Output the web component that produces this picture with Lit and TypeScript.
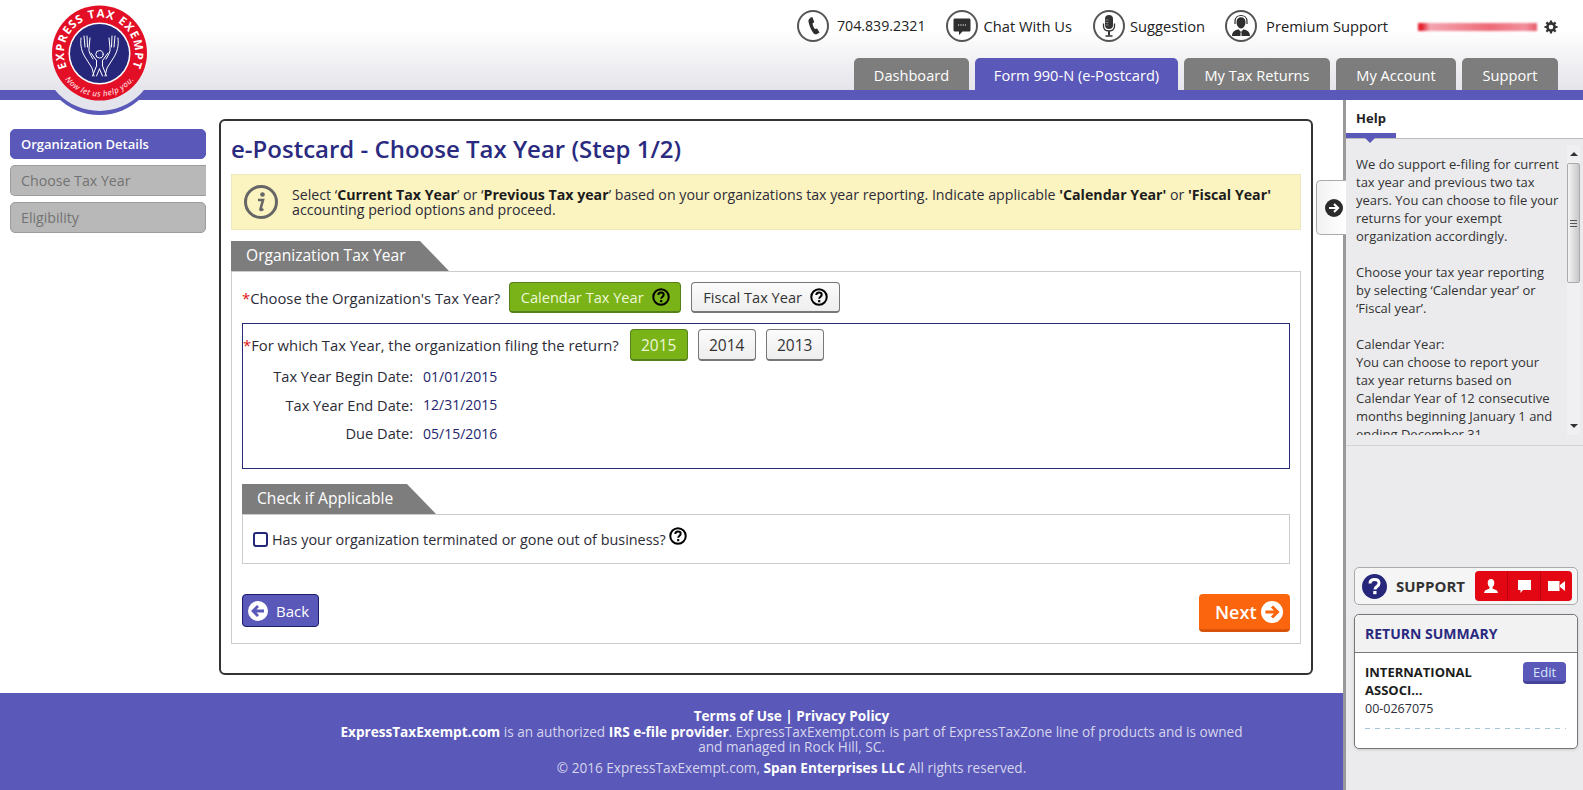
import { LitElement, html, css, svg } from 'lit';
import { customElement } from 'lit/decorators.js';

const helpIcon = (size = 18) => html`<svg class="q" width=${size} height=${size} viewBox="0 0 20 20">
  <circle cx="10" cy="10" r="8.6" fill="none" stroke="#000" stroke-width="2.2"/>
  <path d="M7 7.800c0-1.800 1.300-2.800 3-2.800s3 1 3 2.500c0 2.200-2.800 2.200-2.800 4.500" fill="none" stroke="#000" stroke-width="2.2"/>
  <rect x="9" y="13.400" width="2.400" height="2.400" fill="#000"/>
</svg>`;

const circleWrap = (inner: unknown) => html`<svg class="ring" width="34" height="34" viewBox="0 0 34 34">
  <circle cx="17" cy="17" r="15" fill="#fff" stroke="#555" stroke-width="2"/>${inner}
</svg>`;

const phoneIcon = circleWrap(svg`<path d="M13.500 9l2.800-1 2 5-1.800 1.400c.3 2.200 1.200 4.200 2.600 5.600l2-.6 2.400 4-2.400 1.600c-1.400.8-2.800.2-3.800-1-2.200-3-4-7.500-4.800-11.300-.2-1.400.3-3.100 2-3.700z" fill="#2e2e2e"/>`);
const chatIcon = circleWrap(svg`<path d="M10 9.500h14c1 0 1.500.6 1.500 1.500v10c0 1-.6 1.500-1.500 1.500h-6.500L14 26v-3.500h-4c-1 0-1.500-.6-1.500-1.500V11c0-.9.5-1.500 1.500-1.500z" fill="#2e2e2e"/><path d="M13 16h8" stroke="#fff" stroke-width="1.200" stroke-dasharray="1.200 1.100"/>`);
const micIcon = circleWrap(svg`<rect x="13" y="6" width="8" height="14" rx="4" fill="#333"/><path d="M11.500 14.500V17c0 3.300 2.300 5 5.500 5s5.500-1.700 5.500-5v-2.500" fill="none" stroke="#333" stroke-width="1.300"/><path d="M17 22v4.500" stroke="#333" stroke-width="2"/><path d="M13.500 27h7" stroke="#333" stroke-width="1.500"/><path d="M13.500 11h3M13.500 13.500h3M13.500 16h3" stroke="#999" stroke-width=".8"/>`);
const agentIcon = circleWrap(svg`<path d="M12.500 13c0-3 2-4.800 4.500-4.800s4.500 1.800 4.500 4.800c0 3.500-2 6.500-4.500 6.500s-4.500-3-4.500-6.500z" fill="#2e2e2e"/><path d="M11 15v-2.500c0-8 12-8 12 0V15" fill="none" stroke="#2e2e2e" stroke-width="1.200"/><path d="M8 27c0-4.500 3-5.800 6.500-6.800L17 23l2.500-2.800c3.500 1 6.500 2.300 6.500 6.800z" fill="#2e2e2e"/><path d="M17 23.500v3.500" stroke="#fff" stroke-width="1"/>`);

const gearIcon = html`<svg width="14" height="14" viewBox="0 0 14 14"><circle cx="7" cy="7" r="3.600" fill="none" stroke="#333" stroke-width="2.600"/><path d="M7 .5v3M7 10.500v3M.5 7h3M10.500 7h3M2.400 2.400l2.100 2.100M9.500 9.500l2.100 2.100M2.400 11.600l2.100-2.100M9.500 4.500l2.100-2.100" stroke="#333" stroke-width="2.200"/></svg>`;

const handStrokes = svg`
  <path d="M41 38C40 46 42 52 45 57L52 68L54 76"/>
  <path d="M44 36L45 47M47 36L47.500 47"/>
  <path d="M50 38L49 48C48.500 52 50 54 53 59"/>
  <path d="M56.500 60.500L51 53M56.500 60.500L56.500 66L52.500 76M56.500 76L59.500 69"/>
`;

const logo = html`<svg class="logo" width="120" height="120" viewBox="0 0 120 120">
  <defs>
    <clipPath id="under"><rect x="0" y="90" width="120" height="30"/></clipPath>
    <path id="top" d="M32.300 75.800A35.500 35.500 0 1 1 86.700 75.800"/>
    <path id="bot" d="M21.800 74.750A43.500 43.500 0 0 0 97.200 74.750"/>
  </defs>
  <g clip-path="url(#under)">
    <circle cx="59.500" cy="55.500" r="59.500" fill="#5a58b8"/>
    <circle cx="59.500" cy="53.500" r="57.500" fill="#e4e4ec"/>
  </g>
  <circle cx="59.500" cy="53" r="47.500" fill="#e30f26"/>
  <circle cx="59.500" cy="53.500" r="31" fill="#fff"/>
  <circle cx="59.500" cy="53.500" r="29.500" fill="#26277a"/>
  <text font-family="Open Sans" font-weight="700" font-size="11.500" fill="#fff" letter-spacing="1.100"><textPath href="#top" startOffset="50%" text-anchor="middle">EXPRESS TAX EXEMPT</textPath></text>
  <text font-family="Open Sans" font-style="italic" font-weight="600" font-size="8" letter-spacing=".3" fill="#ffc9cf"><textPath href="#bot" startOffset="50%" text-anchor="middle">Now let us help you.</textPath></text>
  <g fill="none" stroke="#fff" stroke-width="1" stroke-linecap="round">
    <circle cx="59.500" cy="54.300" r="3.700"/>
    ${handStrokes}
    <g transform="translate(119 0) scale(-1 1)">${handStrokes}</g>
  </g>
</svg>`;

const arrowCircle = (r: number, color: string, dir: 'l' | 'r') => html`<svg width=${r * 2} height=${r * 2} viewBox="0 0 20 20">
  <circle cx="10" cy="10" r="10" fill="#fff"/>
  <path d=${dir === 'l' ? 'M16 10H6M10 5l-5 5 5 5' : 'M4 10h10M10 5l5 5-5 5'} fill="none" stroke=${color} stroke-width="2.800"/>
</svg>`;

@customElement('app-root')
export class AppRoot extends LitElement {
  static styles = css`
    :host {
      display: block;
      width: 1583px;
      height: 790px;
      overflow: hidden;
      position: relative;
      font-family: "Open Sans", sans-serif;
      font-size: 14.800px;
      color: #2c2c38;
      background: #fff;
    }
    * { box-sizing: border-box; }
    svg { display: block; flex: none; }

    header {
      height: 100px;
      border-bottom: 10px solid #5a58b8;
      background: linear-gradient(#fff 30px, #e4e4ea 90px);
      display: flex;
      flex-direction: column;
      align-items: flex-end;
      padding-right: 25px;
    }
    .logo { position: absolute; left: 40px; top: 0; }
    .top {
      height: 58px;
      display: flex;
      align-items: center;
      padding-bottom: 7px;
      font-size: 14.700px;
      color: #222;
    }
    .link { display: flex; align-items: center; }
    .link.phone { margin-right: 19px; gap: 7px; font-size: 14.200px; }
    .link.chat { margin-right: 20px; gap: 5px; }
    .link.sug { margin-right: 19px; gap: 4px; }
    .link.prem { gap: 8px; }
    .blur {
      width: 119px;
      height: 8px;
      margin: 2px 7px 0 30px;
      background: linear-gradient(90deg, #e3202e 0 4px, #f3a6b0 12px, #ee6a78 60%, #f1909c 90%, #e85a68);
      filter: blur(1px);
    }
    .gear { margin-top: 2px; }
    .tabs {
      display: grid;
      grid-template-columns: 115px 203px 146px 120px 96px;
      gap: 6px;
      height: 32px;
    }
    .tab {
      height: 32px;
      background: #7d7d7d;
      color: #fff;
      border-radius: 5px 5px 0 0;
      display: flex;
      align-items: center;
      justify-content: center;
      font-size: 14.600px;
      padding-top: 2px;
    }
    .tab.on { background: #5a58b8; }

    .body { display: flex; height: 690px; }
    .left { width: 1343px; display: flex; flex-direction: column; }
    .work { height: 593px; display: flex; padding: 19px 30px 0 10px; gap: 13px; }

    nav { width: 196px; display: flex; flex-direction: column; gap: 6px; padding-top: 10px; }
    nav div {
      height: 31px;
      line-height: 29px;
      padding-left: 10px;
      background: #b8b8b8;
      border: 1px solid #9c9c9c;
      border-radius: 5px;
      color: #737373;
      font-size: 14.200px;
      font-weight: 500;
    }
    nav div.on { background: #5a58b8; border-color: #5a58b8; color: #fff; font-size: 13px; font-weight: 600; height: 30px; }
    nav div.sq { border-radius: 5px 0 0 5px; border-right: 0; }

    .card {
      width: 1094px;
      height: 556px;
      border: 2px solid #333;
      border-radius: 6px;
      padding: 0 10px;
    }
    h1 {
      margin: 0;
      height: 53px;
      padding-top: 10px;
      font-size: 24px;
      line-height: 36px;
      font-weight: 600;
      color: #2a2a80;
    }
    .alert {
      height: 56px;
      background: #fbf3c0;
      border: 1px solid #eee8c0;
      display: flex;
      align-items: center;
      gap: 13px;
      padding-left: 11px;
      font-size: 14.200px;
      line-height: 15px;
      margin-bottom: 11px;
    }
    .alert b { color: #1c1c1c; }
    .section-tab {
      height: 30px;
      background: #7d7d7d;
      color: #fff;
      font-size: 15.600px;
      line-height: 29px;
      padding-left: 15px;
    }
    .t1 { width: 218px; clip-path: polygon(0 0, 189px 0, 100% 100%, 0 100%); }
    .t2 { width: 194px; clip-path: polygon(0 0, 165px 0, 100% 100%, 0 100%); }
    .box {
      border: 1px solid #ccc;
      height: 373px;
      padding: 10px 10px 0;
      display: flex;
      flex-direction: column;
    }
    .row { display: flex; align-items: center; }
    .req { color: #e01010; }
    .btn {
      height: 32px;
      border: 1px solid #777;
      border-bottom-width: 2px;
      border-radius: 4px;
      background: linear-gradient(#fbfbfb, #eee);
      display: flex;
      align-items: center;
      justify-content: center;
      gap: 8px;
      font-size: 14.600px;
      color: #333;
    }
    .btn.on { background: #7ab317; border-color: #56801a; color: #eef7d8; }
    .cal { width: 172px; margin-left: 9px; height: 31px; }
    .fis { width: 149px; margin-left: 10px; height: 31px; }
    .yr { width: 58px; margin-right: 10px; font-size: 15.500px; }
    .years .lead { margin-right: 11px; }
    .inner {
      border: 1px solid #2a2a7a;
      height: 146px;
      margin-top: 10px;
      padding: 5px 0 0;
    }
    .dates {
      display: grid;
      grid-template-columns: 170px auto;
      column-gap: 10px;
      margin-top: 1px;
      grid-auto-rows: 28.500px;
      align-items: center;
      justify-content: start;
      font-size: 14.600px;
    }
    .dates span:nth-child(odd) { text-align: right; }
    .dates span:nth-child(even) { color: #24246e; font-size: 14px; }
    .check { margin-top: 15px; }
    .check-box {
      border: 1px solid #ccc;
      height: 50px;
      display: flex;
      align-items: center;
      padding-left: 10px;
      font-size: 14.400px;
    }
    .cb { width: 15px; height: 15px; border: 2px solid #26277a; border-radius: 3px; margin-right: 4px; margin-top: 1px; }
    .check-box .q { margin: -6px 0 0 3px; }
    .actions { display: flex; justify-content: space-between; align-items: flex-start; margin-top: 30px; }
    .back {
      width: 77px;
      height: 33px;
      background: #5a58b8;
      border: 1px solid #1c1c6a;
      border-radius: 4px;
      color: #fff;
      font-size: 15px;
      display: flex;
      align-items: center;
      gap: 8px;
      padding-left: 5px;
    }
    .next {
      width: 91px;
      height: 38px;
      background: #fb650d;
      border-bottom: 3px solid #d9540a;
      border-radius: 4px;
      color: #fff;
      font-size: 18px;
      font-weight: 600;
      display: flex;
      align-items: center;
      gap: 4px;
      padding-left: 16px;
    }

    footer {
      height: 97px;
      background: #5a58b8;
      color: #fff;
      padding: 15px 0 0 240px;
      text-align: center;
      font-size: 13.600px;
      line-height: 15.500px;
    }
    footer p { margin: 0 auto; width: 920px; color: #d6d6ee; }
    footer b { color: #fff; font-weight: 700; }
    footer .copy { margin-top: 5px; }

    aside {
      width: 240px;
      position: relative;
      background: #ebebee;
      border-left: 3px solid #999;
      display: flex;
      flex-direction: column;
    }
    .handle {
      position: absolute;
      left: -30px;
      top: 80px;
      width: 30px;
      height: 55px;
      background: linear-gradient(90deg, #f2f2f2, #fff);
      border: 1px solid #aaa;
      border-right: 0;
      border-radius: 5px 0 0 5px;
      display: flex;
      align-items: center;
      padding-left: 8px;
    }
    .help-head {
      height: 39px;
      background: #fff;
      border-bottom: 1px solid #bbb;
      position: relative;
    }
    .help-tab {
      width: 50px;
      height: 38px;
      border-bottom: 5px solid #5a58b8;
      text-align: center;
      font-size: 13px;
      font-weight: 700;
      line-height: 36px;
      color: #222;
    }
    .help-tab::after {
      content: '';
      position: absolute;
      left: 19px;
      top: 38px;
      border: 5px solid transparent;
      border-top-color: #5a58b8;
      border-bottom: 0;
    }
    .help-body {
      height: 307px;
      border-bottom: 1px solid #d4d4d8;
      padding: 6px 3px 10px 10px;
      display: flex;
      justify-content: space-between;
    }
    .help-text {
      width: 205px;
      height: 290px;
      overflow: hidden;
      font-size: 13px;
      line-height: 18px;
      padding-top: 10px;
      color: #333;
    }
    .help-text p { margin: 0 0 18px; }
    .scroll {
      width: 13px;
      height: 290px;
      background: #f0f0f2;
      display: flex;
      flex-direction: column;
      align-items: center;
    }
    .arrow { height: 18px; display: flex; align-items: center; justify-content: center; font-size: 0; }
    .arrow i { border: 4px solid transparent; border-bottom: 4px solid #333; border-top: 0; }
    .arrow.down i { border-bottom: 0; border-top: 4px solid #333; }
    .thumb {
      width: 13px;
      height: 120px;
      border: 1px solid #aaa;
      border-radius: 2px;
      background: linear-gradient(90deg, #f4f4f4, #c8c8c8);
      display: flex;
      align-items: center;
      justify-content: center;
    }
    .thumb i { width: 7px; height: 7px; border-top: 1px solid #555; border-bottom: 1px solid #555; position: relative; }
    .thumb i::after { content: ''; position: absolute; left: 0; right: 0; top: 2px; height: 1px; background: #555; }
    .spacer { flex: 1; }
    .support {
      margin: 121px 5px 0 8px;
      height: 38px;
      background: #f5f5f5;
      border: 1px solid #aaa;
      border-radius: 5px;
      display: flex;
      align-items: center;
      padding-left: 7px;
      gap: 9px;
      font-size: 15px;
      font-weight: 700;
      color: #333;
    }
    .support .red {
      margin-left: auto;
      margin-right: 5px;
      width: 97px;
      height: 30px;
      background: #e30613;
      border-radius: 4px;
      display: grid;
      grid-template-columns: 32px 33px 32px;
    }
    .red div { display: flex; align-items: center; justify-content: center; border-left: 1px solid #b80510; }
    .red div:first-child { border-left: 0; }
    .summary {
      margin: 9px 5px 0 8px;
      height: 135px;
      background: #fff;
      border: 1px solid #777;
      border-radius: 5px;
      box-shadow: 0 1px 3px #0002;
    }
    .sum-head {
      height: 38px;
      background: #f2f2f2;
      border-bottom: 1px solid #777;
      border-radius: 5px 5px 0 0;
      padding-left: 10px;
      font-size: 14px;
      font-weight: 700;
      line-height: 37px;
      color: #2a2a80;
    }
    .sum-body { padding: 10px 11px 0 10px; }
    .org { display: flex; justify-content: space-between; align-items: flex-start; }
    .org b { font-size: 13px; line-height: 18px; color: #1c1c1c; width: 120px; }
    .edit {
      width: 43px;
      height: 22px;
      margin-top: -1px;
      background: #5a58b8;
      border-bottom: 3px solid #45439a;
      border-radius: 4px;
      color: #d8e8f8;
      font-size: 13px;
      text-align: center;
      line-height: 20px;
    }
    .ein { font-size: 12.500px; line-height: 19px; }
    .dash {
      height: 1px;
      margin-top: 10px;
      background: repeating-linear-gradient(90deg, #a8c4d8 0 5px, transparent 5px 10px);
    }
  `;

  render() {
    return html`
      <header>
        ${logo}
        <div class="top">
          <div class="link phone">${phoneIcon}<span>704.839.2321</span></div>
          <div class="link chat">${chatIcon}<span>Chat With Us</span></div>
          <div class="link sug">${micIcon}<span>Suggestion</span></div>
          <div class="link prem">${agentIcon}<span>Premium Support</span></div>
          <div class="blur"></div>
          <div class="gear">${gearIcon}</div>
        </div>
        <div class="tabs">
          <div class="tab">Dashboard</div>
          <div class="tab on">Form 990-N (e-Postcard)</div>
          <div class="tab">My Tax Returns</div>
          <div class="tab">My Account</div>
          <div class="tab">Support</div>
        </div>
      </header>
      <div class="body">
        <div class="left">
          <div class="work">
            <nav>
              <div class="on">Organization Details</div>
              <div class="sq">Choose Tax Year</div>
              <div>Eligibility</div>
            </nav>
            <section class="card">
              <h1>e-Postcard - Choose Tax Year (Step 1/2)</h1>
              <div class="alert">
                <svg width="36" height="36" viewBox="0 0 36 36">
                  <circle cx="18" cy="18" r="15.500" fill="none" stroke="#666" stroke-width="3"/>
                  <circle cx="19.500" cy="10.500" r="2.300" fill="#666"/>
                  <path d="M15 16h5l-2.500 9c-.3 1.300.6 1.500 2.800 0" fill="none" stroke="#666" stroke-width="2.600"/>
                </svg>
                <div>Select ‘<b>Current Tax Year</b>’ or ‘<b>Previous Tax year</b>’ based on your organizations tax year reporting. Indicate applicable <b>'Calendar Year'</b> or <b>'Fiscal Year'</b> accounting period options and proceed.</div>
              </div>
              <div class="section-tab t1">Organization Tax Year</div>
              <div class="box">
                <div class="row">
                  <span><span class="req">*</span>Choose the Organization's Tax Year?</span>
                  <div class="btn on cal">Calendar Tax Year ${helpIcon()}</div>
                  <div class="btn fis">Fiscal Tax Year ${helpIcon()}</div>
                </div>
                <div class="inner">
                  <div class="row years">
                    <span class="lead"><span class="req">*</span>For which Tax Year, the organization filing the return?</span>
                    <div class="btn on yr">2015</div>
                    <div class="btn yr">2014</div>
                    <div class="btn yr">2013</div>
                  </div>
                  <div class="dates">
                    <span>Tax Year Begin Date:</span><span>01/01/2015</span>
                    <span>Tax Year End Date:</span><span>12/31/2015</span>
                    <span>Due Date:</span><span>05/15/2016</span>
                  </div>
                </div>
                <div class="section-tab t2 check">Check if Applicable</div>
                <div class="check-box">
                  <div class="cb"></div>
                  <span>Has your organization terminated or gone out of business?</span>
                  ${helpIcon()}
                </div>
                <div class="actions">
                  <div class="back">${arrowCircle(10, '#5a58b8', 'l')}<span>Back</span></div>
                  <div class="next"><span>Next</span>${arrowCircle(11, '#fb650d', 'r')}</div>
                </div>
              </div>
            </section>
          </div>
          <footer>
            <p><b>Terms of Use | Privacy Policy</b></p>
            <p><b>ExpressTaxExempt.com</b> is an authorized <b>IRS e-file provider</b>. ExpressTaxExempt.com is part of ExpressTaxZone line of products and is owned and managed in Rock Hill, SC.</p>
            <p class="copy">© 2016 ExpressTaxExempt.com, <b>Span Enterprises LLC</b> All rights reserved.</p>
          </footer>
        </div>
        <aside>
          <div class="handle">
            <svg width="18" height="18" viewBox="0 0 20 20"><circle cx="10" cy="10" r="10" fill="#2b2b2b"/><path d="M4.500 10h9M10 5.500l4.500 4.500-4.500 4.500" fill="none" stroke="#fff" stroke-width="2.400"/></svg>
          </div>
          <div class="help-head"><div class="help-tab">Help</div></div>
          <div class="help-body">
            <div class="help-text">
              <p>We do support e-filing for current tax year and previous two tax years. You can choose to file your returns for your exempt organization accordingly.</p>
              <p>Choose your tax year reporting by selecting ‘Calendar year’ or ‘Fiscal year’.</p>
              <p>Calendar Year:<br>You can choose to report your tax year returns based on Calendar Year of 12 consecutive months beginning January 1 and ending December 31.</p>
            </div>
            <div class="scroll">
              <div class="arrow"><i></i></div>
              <div class="thumb"><i></i></div>
              <div class="spacer"></div>
              <div class="arrow down"><i></i></div>
            </div>
          </div>
          <div class="support">
            <svg width="25" height="25" viewBox="0 0 25 25"><circle cx="12.500" cy="12.500" r="12.500" fill="#26277a"/><path d="M8 9.500c0-2.700 2-4 4.500-4s4.500 1.300 4.500 3.800c0 3.300-4 3.200-4 6.200" fill="none" stroke="#fff" stroke-width="3"/><rect x="11.200" y="17" width="3.300" height="3.200" fill="#fff"/></svg>
            <span>SUPPORT</span>
            <div class="red">
              <div><svg width="16" height="16" viewBox="0 0 16 16"><path d="M8 1c2 0 3.300 1.500 3.300 3.700 0 2-.8 3.600-1.800 4.300v1.500l4.500 2 1 2.500H1l1-2.500 4.500-2V9c-1-.7-1.800-2.300-1.800-4.300C4.700 2.500 6 1 8 1z" fill="#fff"/></svg></div>
              <div><svg width="15" height="15" viewBox="0 0 15 15"><path d="M1 1h13v10H6l-2.500 3v-3H1z" fill="#fff"/></svg></div>
              <div><svg width="17" height="12" viewBox="0 0 17 12"><rect y="1" width="11.500" height="10" fill="#fff"/><path d="M12 5l5-4v10l-5-4z" fill="#fff"/></svg></div>
            </div>
          </div>
          <div class="summary">
            <div class="sum-head">RETURN SUMMARY</div>
            <div class="sum-body">
              <div class="org"><b>INTERNATIONAL ASSOCI...</b><div class="edit">Edit</div></div>
              <div class="ein">00-0267075</div>
              <div class="dash"></div>
            </div>
          </div>
        </aside>
      </div>
    `;
  }
}
